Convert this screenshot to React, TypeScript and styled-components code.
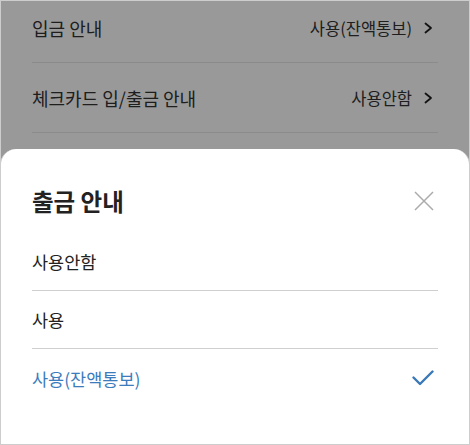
import React from "react";
import styled, { createGlobalStyle } from "styled-components";

const Global = createGlobalStyle`
  html, body { margin: 0; padding: 0; background: #fff; }
  body { font-family: "Noto Sans CJK KR", "Noto Sans", sans-serif; }
  * { box-sizing: border-box; }
`;

const Frame = styled.div`
  position: relative;
  width: 470px;
  height: 445px;
  overflow: hidden;
  background: #fff;
  border: 1px solid #cdcdcd;
`;

const List = styled.div`
  margin-top: -8px;
  padding: 0 31px;
  display: flex;
  flex-direction: column;
`;

const SettingRow = styled.div`
  height: 70px;
  display: flex;
  align-items: center;
  justify-content: space-between;
  border-bottom: 1px solid #e8e8e8;
  color: #333;
`;

const Label = styled.span`
  font-size: 18px;
`;

const Value = styled.span`
  display: flex;
  align-items: center;
  gap: 12px;
  padding-right: 5px;
  font-size: 16.5px;
`;

const Dim = styled.div`
  position: absolute;
  inset: 0;
  background: rgba(0, 0, 0, 0.4);
`;

const Sheet = styled.div`
  position: absolute;
  left: -1px;
  right: -1px;
  bottom: -1px;
  height: 296px;
  background: #fff;
  border: 1px solid #cdcdcd;
  border-top: none;
  border-radius: 16px 16px 0 0;
  padding: 0 31px;
  display: flex;
  flex-direction: column;
`;

const Header = styled.div`
  display: flex;
  align-items: center;
  justify-content: space-between;
  padding: 35px 4px 15px 0;
  height: 84px;
`;

const Title = styled.h2`
  margin: 0;
  font-size: 23.5px;
  font-weight: 700;
  line-height: 34px;
  color: #222;
`;

const Option = styled.div<{ $selected?: boolean; $last?: boolean }>`
  height: 58px;
  display: flex;
  align-items: center;
  justify-content: space-between;
  padding-right: 4px;
  font-size: 17.5px;
  color: ${(p) => (p.$selected ? "#3b7cbd" : "#222")};
  border-bottom: ${(p) => (p.$last ? "none" : "1px solid #cfcfcf")};
`;

const Chevron = () => (
  <svg width="9" height="12" viewBox="0 0 9 12" fill="none">
    <path d="M1.5 1.5 L7 6 L1.5 10.5" stroke="#1f1f1f" strokeWidth="1.8" strokeLinecap="round" strokeLinejoin="round" />
  </svg>
);

const Close = () => (
  <svg width="20" height="20" viewBox="0 0 20 20" fill="none">
    <path d="M1 1 L19 19 M19 1 L1 19" stroke="#ababab" strokeWidth="1.5" />
  </svg>
);

const Check = () => (
  <svg width="22" height="16" viewBox="0 0 22 16" fill="none">
    <path d="M1.5 7.5 L8 14 L20.5 1.5" stroke="#3a78b8" strokeWidth="2.4" strokeLinecap="round" strokeLinejoin="round" />
  </svg>
);

export default function App() {
  return (
    <>
      <Global />
      <Frame>
        <List>
          <SettingRow>
            <Label>입금 안내</Label>
            <Value>
              사용(잔액통보)
              <Chevron />
            </Value>
          </SettingRow>
          <SettingRow>
            <Label>체크카드 입/출금 안내</Label>
            <Value>
              사용안함
              <Chevron />
            </Value>
          </SettingRow>
          <SettingRow>
            <Label>출금 안내</Label>
            <Value>
              사용(잔액통보)
              <Chevron />
            </Value>
          </SettingRow>
        </List>
        <Dim />
        <Sheet>
          <Header>
            <Title>출금 안내</Title>
            <Close />
          </Header>
          <Option>사용안함</Option>
          <Option>사용</Option>
          <Option $selected $last>
            사용(잔액통보)
            <Check />
          </Option>
        </Sheet>
      </Frame>
    </>
  );
}
